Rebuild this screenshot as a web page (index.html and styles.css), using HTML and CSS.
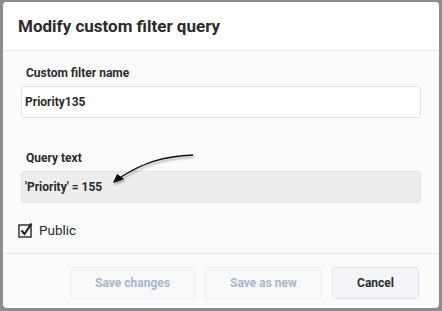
FILE: index.html
```html
<!DOCTYPE html>
<html>
<head>
<meta charset="utf-8">
<link rel="stylesheet" href="styles.css">
</head>
<body>
<div class="dialog">
  <div class="header">Modify custom filter query</div>
  <div class="body">
    <div class="label">Custom filter name</div>
    <div class="input">Priority135</div>
    <div class="label query-label">Query text</div>
    <div class="input readonly">'Priority' = 155</div>
    <svg class="arrow" width="100" height="40" viewBox="0 0 100 40">
      <defs>
        <filter id="sh" x="-20%" y="-20%" width="140%" height="160%">
          <feDropShadow dx="1" dy="2" stdDeviation="1" flood-color="#000" flood-opacity="0.35"/>
        </filter>
      </defs>
      <g filter="url(#sh)">
        <path d="M90 2 C60 3 40 10 18 24" fill="none" stroke="#111" stroke-width="1.3"/>
        <polygon points="10,30 14,21 21,26" fill="#000"/>
      </g>
    </svg>
    <label class="check">
      <svg class="box" width="16" height="16" viewBox="0 0 16 16">
        <rect x="1" y="3" width="12" height="12" fill="#fff" stroke="#333" stroke-width="1.5"/>
        <path d="M3.5 8.5 L6.5 12 L13.5 1.5" fill="none" stroke="#222" stroke-width="2.2"/>
      </svg>
      <span>Public</span>
    </label>
  </div>
  <div class="footer">
    <button class="btn disabled save">Save changes</button>
    <button class="btn disabled saveas">Save as new</button>
    <button class="btn cancel">Cancel</button>
  </div>
</div>
</body>
</html>
```
FILE: styles.css
```css
html, body {
  margin: 0;
  padding: 0;
  width: 442px;
  height: 311px;
  background: #8c8c8c;
  overflow: hidden;
}
body {
  padding: 2px 3px 3px 3px;
  box-sizing: border-box;
  font-family: Roboto, "Liberation Sans", sans-serif;
}
.dialog {
  width: 436px;
  height: 306px;
  background: #fbfbfc;
  border-radius: 4px;
  overflow: hidden;
  display: flex;
  flex-direction: column;
}
.header {
  height: 48px;
  background: #fff;
  border-bottom: 1px solid #e4e6ea;
  font-size: 17px;
  font-weight: 700;
  color: #2b2b2b;
  padding-left: 15px;
  display: flex;
  align-items: center;
  box-sizing: content-box;
}
.body {
  position: relative;
  padding: 15px 18px 0 18px;
  height: 203px;
  box-sizing: border-box;
  border-bottom: 1px solid #e4e6ea;
}
.label {
  font-size: 12px;
  font-weight: 700;
  color: #2b2b2b;
  padding-left: 5px;
  line-height: 14px;
  margin-bottom: 6px;
}
.query-label {
  margin-top: 33px;
}
.input {
  height: 32px;
  box-sizing: border-box;
  border: 1px solid #dfe1e6;
  border-radius: 3px;
  background: #fff;
  font-size: 12px;
  font-weight: 700;
  color: #2b2b2b;
  padding-left: 3px;
  display: flex;
  align-items: center;
}
.input.readonly {
  background: #ededed;
  border-color: #e2e2e2;
}
.arrow {
  position: absolute;
  left: 100px;
  top: 102px;
}
.check {
  display: flex;
  align-items: center;
  margin-top: 19px;
  margin-left: -3px;
  font-size: 13.5px;
  color: #2b2b2b;
  gap: 5px;
}
.footer {
  flex: 1;
  display: flex;
  justify-content: flex-end;
  align-items: flex-start;
  padding: 13px 20px 0 0;
  gap: 10px;
}
.btn {
  height: 32px;
  border: 1px solid #e6e9ee;
  border-radius: 3px;
  background: #f5f7fa;
  font-family: Roboto, "Liberation Sans", sans-serif;
  font-size: 12px;
  font-weight: 700;
  padding: 0;
}
.btn.disabled {
  color: #aab6c6;
  background: #f8f9fb;
  border-color: #eceef2;
}
.save { width: 125px; }
.saveas { width: 117px; }
.cancel { width: 87px; color: #2b2b2b; border-color: #dfe2e7; background: #f3f5f8; }
```
